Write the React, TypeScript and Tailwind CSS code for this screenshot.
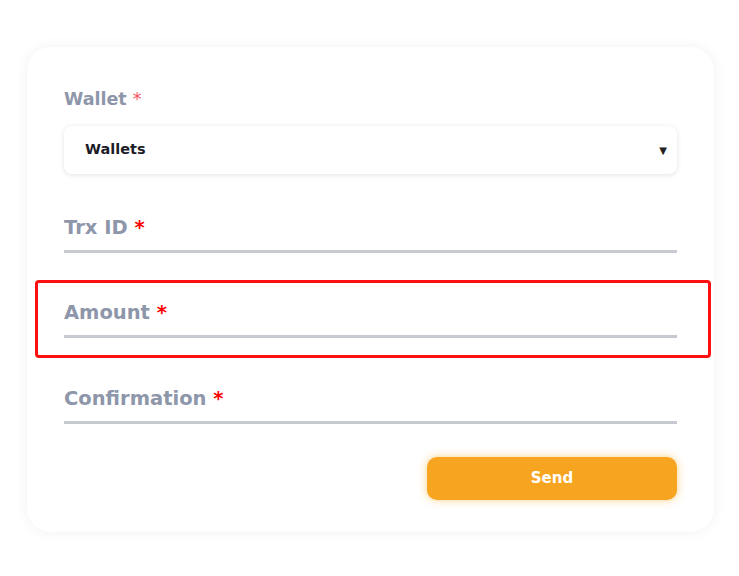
import { ReactNode } from 'react';

const font = { fontFamily: '"DejaVu Sans", "Liberation Sans", sans-serif' };

const UnderlineField = ({ label, highlight }: { label: string; highlight?: boolean }): ReactNode => (
    <div
        className={
            "ml-[-29px] mr-[-34px] pl-[26px] pr-[31px] border-[3px] rounded-[4px] " +
            (highlight ? "border-[#ff1010] mt-[-1px] pt-[18px] pb-[17px]" : "border-transparent pt-[17px] pb-[16px]")
        }
    >
        <div className="text-[19.5px] leading-[24px] font-bold text-[#8e96aa]">
            {label} <span className="text-[#ff0000]">*</span>
        </div>
        <div className="mt-[10px] h-[3px] bg-[#c7c9d1]" />
    </div>
);

export default function App() {
    return (
        <div className="min-h-screen bg-white pt-[47px] pl-[27px]" style={font}>
            <div className="w-[687px] rounded-[24px] bg-white px-[37px] pt-[40px] pb-[32px] shadow-[0_0_14px_rgba(0,0,0,0.06)]">
                <div className="text-[17.5px] leading-[24px] font-bold text-[#8e96aa]">
                    Wallet <span className="font-normal text-[#f2545b]">*</span>
                </div>
                <div className="mt-[15px] flex h-[48px] items-center justify-between rounded-[8px] bg-white pl-[21px] pr-[10px] shadow-[0_1px_5px_rgba(0,0,0,0.12)]">
                    <span className="text-[14.5px] font-bold text-[#1c1c28]">Wallets</span>
                    <span className="text-[10px] text-[#222]">▼</span>
                </div>

                <div className="mt-[22px] flex flex-col gap-[9px]">
                    <UnderlineField label="Trx ID" />
                    <UnderlineField label="Amount" highlight />
                    <UnderlineField label="Confirmation" />
                </div>

                <div className="mt-[14px] flex justify-end">
                    <button className="h-[43px] w-[250px] rounded-[10px] bg-[#f7a521] text-[15px] font-bold text-white shadow-[0_0_8px_rgba(247,165,33,0.55)]">
                        Send
                    </button>
                </div>
            </div>
        </div>
    );
}
